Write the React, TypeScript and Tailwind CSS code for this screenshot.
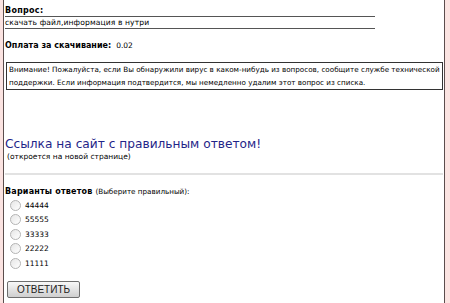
import React from 'react';

const answers = ['44444', '55555', '33333', '22222', '11111'];

function Radio() {
  return (
    <span className="inline-block w-[11px] h-[11px] rounded-full border border-[#b4b4b4] bg-gradient-to-br from-[#e6e6e6] to-[#ffffff]" />
  );
}

export default function App() {
  return (
    <div className="flex w-[450px] h-[303px] bg-white text-black font-['DejaVu_Sans',sans-serif] overflow-hidden">
      <div className="w-[3px] bg-[#fbe3e1]" />
      <div className="w-[1px] bg-[#5b4d4d]" />

      <div className="flex-1 pl-[1px]">
        {/* question */}
        <div className="w-[370px] pt-[5px]">
          <div className="h-[12px] leading-[12px] text-[8px] font-bold tracking-[0.3px] border-b border-[#555]">
            Вопрос:
          </div>
          <div className="h-[12px] leading-[11px] text-[7.6px] tracking-[0.1px] border-b border-[#555]">
            скачать файл,информация в нутри
          </div>
        </div>

        <div className="mt-[11px] h-[12px] leading-[12px] text-[8px]">
          <span className="font-bold">Оплата за скачивание:</span>
          <span className="ml-[5px] text-[7.5px]">0.02</span>
        </div>

        {/* warning */}
        <div className="mt-[10px] ml-[1px] w-[437px] border border-[#333] pl-[2px] text-[7.2px] leading-[13px] whitespace-nowrap">
          <div>Внимание! Пожалуйста, если Вы обнаружили вирус в каком-нибудь из вопросов, сообщите службе технической</div>
          <div>поддержки. Если информация подтвердится, мы немедленно удалим этот вопрос из списка.</div>
        </div>

        {/* link */}
        <div className="mt-[46px] text-[12.2px] leading-[16px] text-[#1f2588]">
          Ссылка на сайт с правильным ответом!
        </div>
        <div className="ml-[2px] text-[7.5px] leading-[10px]">(откроется на новой странице)</div>

        <div className="mt-[11px] w-[438px] border-t-2 border-[#e2e2e2]" />

        {/* answers */}
        <div className="mt-[11px] h-[12px] leading-[12px] text-[8px]">
          <span className="font-bold tracking-[0.2px]">Варианты ответов</span>
          <span className="ml-[3px] text-[7.2px]">(Выберите правильный):</span>
        </div>
        <div className="flex flex-col">
          {answers.map((a) => (
            <div key={a} className="h-[14.5px] flex items-center pl-[5px] gap-[4px] text-[7.5px]">
              <Radio />
              <span>{a}</span>
            </div>
          ))}
        </div>

        <button className="mt-[10px] ml-[2px] w-[73px] h-[17px] border border-[#6e6e6e] rounded-[2px] bg-gradient-to-b from-[#f8f8f8] to-[#cfcfcf] font-['Liberation_Sans',sans-serif] text-[10px] leading-[15px] text-[#222]">
          ОТВЕТИТЬ
        </button>
      </div>

      <div className="w-[1px] bg-[#5b4d4d]" />
      <div className="w-[5px] bg-[#fbe3e1]" />
    </div>
  );
}
